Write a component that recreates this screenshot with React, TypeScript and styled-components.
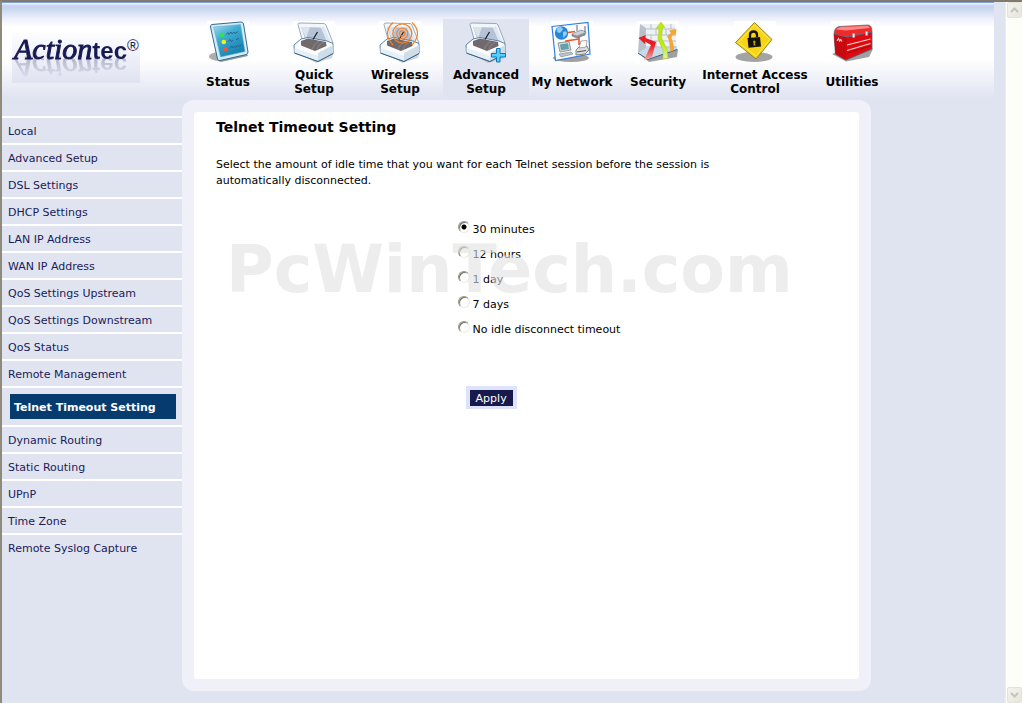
import React, { useState } from 'react';
import styled, { createGlobalStyle } from 'styled-components';

const GlobalStyle = createGlobalStyle`
  *, *::before, *::after { box-sizing: border-box; }
  body {
    margin: 0;
    background: #e0e4f1;
    color: #000;
    font-family: Verdana, 'DejaVu Sans', sans-serif;
    font-size: 11px;
  }
`;

const Frame = styled.div`
  display: flex;
  min-height: 100vh;
  border-top: 2px solid #7f7c6e;
  border-left: 2px solid #8f8b7c;
`;

const Page = styled.div`
  flex: 1;
  min-width: 0;
  display: flex;
  flex-direction: column;
`;

const Header = styled.header`
  display: flex;
  align-items: flex-start;
  height: 98px;
  margin-right: 11px;
  border-top: 1px solid #7f9ad4;
  background: linear-gradient(
    to bottom,
    #ffffff 0px,
    #dfe7f6 1px,
    #c3d2ee 3px,
    #c9d6f0 6px,
    #eceffa 15px,
    #ffffff 24px,
    #ffffff 56px,
    #e0e4f1 95px
  );
`;

const Logo = styled.a`
  display: flex;
  align-items: flex-start;
  width: 128px;
  height: 50px;
  margin: 30px 0 0 10px;
  padding-left: 2px;
  background: linear-gradient(to bottom, #fdfdff, #dfe3f1);
  color: #171a52;
  text-decoration: none;
  white-space: nowrap;
`;

const LogoWord = styled.span`
  display: flex;
  align-items: baseline;
  height: 31px;
  -webkit-box-reflect: below -12px linear-gradient(to bottom, transparent 10%, rgba(0, 0, 0, 0.35));
`;

const LogoScript = styled.span`
  font: italic 30px/31px 'Liberation Serif', serif;
  -webkit-text-stroke: 1px #171a52;
`;

const LogoSans = styled.span`
  font: bold 24px/31px 'Liberation Sans', Arial, sans-serif;
`;

const LogoMark = styled.span`
  font: 16px/26px 'Liberation Sans', Arial, sans-serif;
`;

const Nav = styled.nav`
  display: flex;
  margin: 16px 0 0 45px;
`;

const Tab = styled.a<{ $active?: boolean; $wide?: boolean }>`
  display: flex;
  flex-direction: column;
  align-items: center;
  width: ${p => (p.$wide ? 108 : 86)}px;
  height: 81px;
  padding-top: 2px;
  background: ${p => (p.$active ? '#e0e4f1' : 'transparent')};
  color: #000;
  font-size: 12px;
  font-weight: bold;
  line-height: 14px;
  text-align: center;
  text-decoration: none;

  svg {
    width: 42px;
    height: 42px;
    flex: none;
    background: ${p => (p.$active ? 'transparent' : '#fff')};
  }
`;

const TabLabel = styled.span`
  display: flex;
  align-items: center;
  height: 38px;
  white-space: pre;
`;

const Columns = styled.div`
  flex: 1;
  display: flex;
`;

const Sidebar = styled.nav`
  flex: none;
  width: 180px;
  padding-top: 16px;
`;

const Menu = styled.ul`
  list-style: none;
  margin: 0;
  padding: 0;
`;

const MenuItem = styled.li<{ $active?: boolean }>`
  border-top: 2px solid #fff;
  padding: ${p => (p.$active ? '6px 6px 6px 8px' : '0')};
`;

const MenuLink = styled.a<{ $active?: boolean }>`
  display: block;
  padding-top: 2px;
  padding-left: ${p => (p.$active ? 4 : 6)}px;
  line-height: 23px;
  color: ${p => (p.$active ? '#fff' : '#1b1b57')};
  background: ${p => (p.$active ? '#063b70' : 'transparent')};
  font-weight: ${p => (p.$active ? 'bold' : 'normal')};
  text-decoration: none;
  white-space: nowrap;
`;

const Panel = styled.main`
  flex: 1;
  min-width: 0;
  display: flex;
  margin: 0 134px 12px 0;
  padding: 12px;
  border-radius: 12px;
  background: #f0f1f8;
`;

const Content = styled.section`
  position: relative;
  flex: 1;
  min-width: 0;
  padding: 6px 0 0 22px;
  border-radius: 3px;
  background: #fff;
`;

const Title = styled.h1`
  margin: 0;
  font-size: 14px;
  line-height: 18px;
`;

const Intro = styled.p`
  max-width: 530px;
  margin: 21px 0 0;
  line-height: 16px;
`;

const Form = styled.form`
  width: fit-content;
  margin: 31px auto 0;
`;

const Options = styled.fieldset`
  margin: 0;
  padding: 0 0 0 3px;
  border: 0;
`;

const Option = styled.label`
  display: flex;
  gap: 3px;
  height: 25px;
  line-height: 19px;
  white-space: nowrap;
`;

const Radio = styled.input`
  appearance: none;
  width: 12px;
  height: 12px;
  margin: 1px 0 0;
  border: 1px solid;
  border-color: #9a9788 #efecdf #efecdf #9a9788;
  border-radius: 50%;
  background: #fff;
  box-shadow: inset 1px 1px 0 #77746a;

  &:checked {
    background: radial-gradient(circle at 5px 5px, #000 2px, #fff 3px);
  }
`;

const Apply = styled.button`
  display: block;
  margin: 41px 0 0 11px;
  padding: 1px 6px 0;
  border: 4px solid #dde3fd;
  border-bottom-width: 3px;
  background: #171a4b;
  color: #fff;
  font: inherit;
  line-height: 15px;
`;

const Watermark = styled.div`
  position: absolute;
  top: 120px;
  left: 32px;
  color: rgba(225, 225, 225, 0.6);
  font-size: 65px;
  font-weight: bold;
  line-height: 75px;
  pointer-events: none;
`;

const ScrollBar = styled.div`
  flex: none;
  display: flex;
  flex-direction: column;
  justify-content: space-between;
  width: 17px;
  border-left: 1px solid #eeede5;
  background: #fefef8;
`;

const ScrollButton = styled.button`
  display: flex;
  align-items: center;
  justify-content: center;
  width: 15px;
  height: 16px;
  margin: 0 1px;
  padding: 0;
  border: 1px solid #e3e2d8;
  border-radius: 2px;
  background: linear-gradient(135deg, #f4f4ef, #e6e5dc);
`;

const StatusIcon = () => (
  <svg viewBox="0 0 42 42" aria-hidden="true">
    <defs>
      <linearGradient id="screen" x1="0" y1="0" x2="0.6" y2="1">
        <stop offset="0" stopColor="#a9dcec" />
        <stop offset="0.4" stopColor="#3fadd3" />
        <stop offset="1" stopColor="#157fae" />
      </linearGradient>
    </defs>
    <ellipse cx="14" cy="35.500" rx="12" ry="4.500" fill="#999" opacity="0.8" />
    <path d="M11 40L40 33L41 35L14 41Z" fill="#8d9aa5" />
    <path d="M5 3.500L34 1Q36 1 36.500 3L41 31Q41 33 39 33.600L13 39.500Q11 40 10.500 38L3.500 6Q3.300 4 5 3.500Z" fill="#d7ecf6" stroke="#35688f" strokeWidth="1" />
    <path d="M6.500 6L33.500 3.500L38 30.500L13.500 36Z" fill="url(#screen)" stroke="#5cb5d6" strokeWidth="0.600" />
    <circle cx="15.200" cy="14" r="2.300" fill="#2fe83c" />
    <circle cx="16.800" cy="21" r="2.300" fill="#f3ee1c" />
    <circle cx="18.600" cy="28" r="2.300" fill="#ee5638" />
    <path d="M19 13.500l2-2 1 2 2-2.500 1 2 2-2 1 1.500 3-2M21 20.500l2-2 1 2 2-1.500M29 18.500l3-1M22.500 27.500l2-2.500 1 2 2-2 1 1.500 2-2 1 1 4-2" fill="none" stroke="#28618c" strokeWidth="0.900" />
  </svg>
);

const BoxArt = () => (
  <>
    <path d="M0 29L23 42L39 37L41 30Z" fill="#777" opacity="0.3" />
    <path d="M5 3.500Q5 2 7 2L29 2.500Q32 2 33 4L40 22L33 24L9 18Z" fill="#f4f7fa" stroke="#8195a8" strokeWidth="0.800" />
    <path d="M8 6L28 6.500L35 22L12 17.500Z" fill="#b5c3d8" />
    <path d="M8 6L17 6L13 17.500Z" fill="#dbe3ee" />
    <path d="M28 6.500L31 5L38 22L34.500 22Z" fill="#dfe7ee" />
    <path d="M1 24L8 18L15 16.500L34 20L40 22.500V32.500L25 40.500L1.500 32Z" fill="#fafcfd" stroke="#49779e" strokeWidth="0.900" />
    <path d="M25 32L40 24V32.500L25 40.500Z" fill="#cfdde9" />
    <path d="M1.500 27L25 35V40L1.500 32Z" fill="#e7eef4" />
    <path d="M1.500 32L25 40.500L40 32.500" fill="none" stroke="#2e648f" strokeWidth="1" />
    <path d="M8 20L15 17.500L33 21L33.500 25L22 30L8 24.500Z" fill="#706a6d" />
    <path d="M19 28.500Q21 23 26 20.500M24 29Q25 24 30 21.500" fill="none" stroke="#857e82" strokeWidth="1.300" />
    <path d="M20 18.500L24.500 11" stroke="#222" strokeWidth="1.300" />
  </>
);

const QuickIcon = () => (
  <svg viewBox="0 0 42 42" aria-hidden="true"><BoxArt /></svg>
);

const WirelessIcon = () => (
  <svg viewBox="0 0 42 42" aria-hidden="true">
    <BoxArt />
    <g fill="none" stroke="#f5822a" strokeWidth="1.200">
      <circle cx="23.300" cy="12.500" r="2.700" />
      <circle cx="23.300" cy="12.500" r="5.500" />
      <circle cx="23.300" cy="12.500" r="9.500" />
      <path d="M14 1.500Q3 12 14 24M33 1.500Q44 12 33 24" />
    </g>
  </svg>
);

const AdvancedIcon = () => (
  <svg viewBox="0 0 42 42" aria-hidden="true">
    <BoxArt />
    <path d="M31.500 27.500h3.500v5h5.500v3.500h-5.500v5h-3.500v-5h-5v-3.500h5z" fill="#57cdfa" stroke="#0b78bd" strokeWidth="1" />
  </svg>
);

const NetworkIcon = () => (
  <svg viewBox="0 0 42 42" aria-hidden="true">
    <ellipse cx="20" cy="37" rx="18" ry="4" fill="#888" opacity="0.8" />
    <path d="M1 5.500L37 1.500L39 33L4.500 39.500Z" fill="#fbfcfd" stroke="#2f7fe4" strokeWidth="1.200" />
    <path d="M17 11.500L24 10.500M28 16V23L34 22M28 18L15 20V24" fill="none" stroke="#f0562e" strokeWidth="1.600" />
    <circle cx="10.500" cy="12" r="6.700" fill="#2686d8" />
    <path d="M6 7.500Q10 4.500 12 8Q10 12 8 12Q5 11 6 7.500ZM12 11Q16 9 16 13L12 17Z" fill="#93cdf3" />
    <path d="M21 13L30 9L35 11L34 14L26 17L21 15Z" fill="#8a9198" stroke="#596068" strokeWidth="0.500" />
    <path d="M21 13L30 9.500L35 11L26 14.500Z" fill="#cdd2d6" />
    <path d="M26 4V10M34 5V11" stroke="#555" strokeWidth="0.900" />
    <path d="M7 22L18 20.500L20 29L9 31Z" fill="#d9dddc" stroke="#777f80" strokeWidth="0.800" />
    <path d="M9 23.500L17 22.300L18 28L10 29.300Z" fill="#63a0a7" />
    <path d="M8 33L20 31L22 33L10 36Z" fill="#bfc5c2" stroke="#818784" strokeWidth="0.600" />
    <path d="M25 29L28 26L36 25L38 29L34 33L25 34Z" fill="#dadcdc" stroke="#666c70" strokeWidth="0.800" />
    <path d="M28 27L30 20L36 19.500L35 26Z" fill="#fff" stroke="#777" strokeWidth="0.600" />
    <path d="M26 31L35 29.500" stroke="#555" strokeWidth="1" />
  </svg>
);

const SecurityIcon = () => (
  <svg viewBox="0 0 42 42" aria-hidden="true">
    <defs>
      <linearGradient id="redArrow" x1="0" y1="0" x2="0" y2="1">
        <stop offset="0.400" stopColor="#e81c24" />
        <stop offset="1" stopColor="#f7a6a0" />
      </linearGradient>
      <linearGradient id="greenArrow" x1="0" y1="0" x2="0" y2="1">
        <stop offset="0.600" stopColor="#bfe80e" />
        <stop offset="1" stopColor="#e3f2a2" />
      </linearGradient>
    </defs>
    <path d="M1 32L12 41L40 36L41 28Z" fill="#888" opacity="0.800" />
    <path d="M3 3H38L40 28L11 38.500L1 32Z" fill="#eef2f5" />
    <path d="M3 3L9 7V28L1 32Z" fill="#b9c2cc" />
    <path d="M1 32L9 27L40 25V28.500L11 38.500Z" fill="#c6dbea" />
    <path d="M1 32L11 38.500L40 28.500" fill="none" stroke="#36618d" strokeWidth="1" />
    <path d="M9 8H38M9 14H38M9 20H39M9 26H39M14 3V8M24 3V8M34 3V8M19 8V14M29 8V14M14 14V20M34 14V20M19 20V26M33 20V26M3 10L9 13M3 19L9 21" fill="none" stroke="#b5c0cb" strokeWidth="1" />
    <path d="M30 15L34 12L32 9.500L39.500 8L38.500 15L36.500 13.500L34 16.500Q37 22 37 29L33 31Q34 22 30 15Z" fill="#f5a536" />
    <path d="M7 39L14 24L8 20.500V23L1.500 17L8.500 14V17L19 21L15 36Z" fill="url(#redArrow)" />
    <path d="M26 38L26 29L21 18L22 7L19 7.500L24 1L28 6.500L25.500 6.500L24.500 17L30 28L31 37Z" fill="url(#greenArrow)" stroke="#a6c621" strokeWidth="0.500" />
  </svg>
);

const LockIcon = () => (
  <svg viewBox="0 0 42 42" aria-hidden="true">
    <ellipse cx="20" cy="36" rx="18.500" ry="5" fill="#a3a3a3" />
    <path d="M20.500 1.500L38 18.500L22 38L1.500 21.500Z" fill="#f7d514" stroke="#8c7a18" strokeWidth="0.900" />
    <path d="M20.500 4L35.500 18.500L22 35L4.500 21.500Z" fill="none" stroke="#ffe95a" strokeWidth="1" />
    <path d="M16 17V14Q16 10.500 19.500 10.500Q23 10.500 23 14V16" fill="none" stroke="#15130a" strokeWidth="2.300" />
    <path d="M13.500 17L26 16L27 25.500L14.500 26.800Z" fill="#15130a" />
    <path d="M20 19.500a1.400 1.400 0 0 1 1 2.500l.5 2.500h-2l.2-2.500a1.400 1.400 0 0 1 .3-2.500" fill="#b89d10" />
  </svg>
);

const UtilitiesIcon = () => (
  <svg viewBox="0 0 42 42" aria-hidden="true">
    <path d="M1 33L15 40.500L38 36L42 28L30 22Z" fill="#777" opacity="0.700" />
    <path d="M3 13L16 16L41 11V28L15 39L4.500 33Z" fill="#df0a0f" stroke="#3f6488" strokeWidth="0.800" />
    <path d="M3 13L16 17L15 39L4.500 33Z" fill="#c8090d" />
    <path d="M3 13Q3 7 8 5.500L37 4Q41 4 41 11L16 16Z" fill="#ee2a2a" stroke="#4e6a88" strokeWidth="0.700" />
    <path d="M5 8.500Q7 6 10 6L37 4.800L39 7L15 9.500Z" fill="#ff8a83" />
    <path d="M16 24L39.500 18M16 29.500L39.500 22.500" stroke="#f9d5d3" strokeWidth="1.200" />
    <path d="M16 32L40 25" stroke="#8e0709" strokeWidth="0.700" />
    <path d="M21.500 12.500h2.300v4h-2.300zM34.500 10.500h2.200v4h-2.200z" fill="#f3f3f3" stroke="#888" strokeWidth="0.400" />
    <path d="M6 20l1.500-2.500 1.200 2.500 1-1.500 1.300 2" fill="none" stroke="#f4c6c4" strokeWidth="1.200" />
  </svg>
);

const tabs = [
  { label: 'Status', Icon: StatusIcon },
  { label: 'Quick\nSetup', Icon: QuickIcon },
  { label: 'Wireless\nSetup', Icon: WirelessIcon },
  { label: 'Advanced\nSetup', Icon: AdvancedIcon, active: true },
  { label: 'My Network', Icon: NetworkIcon },
  { label: 'Security', Icon: SecurityIcon },
  { label: 'Internet Access\nControl', Icon: LockIcon, wide: true },
  { label: 'Utilities', Icon: UtilitiesIcon },
];

const menu = [
  'Local', 'Advanced Setup', 'DSL Settings', 'DHCP Settings', 'LAN IP Address', 'WAN IP Address',
  'QoS Settings Upstream', 'QoS Settings Downstream', 'QoS Status', 'Remote Management',
  'Telnet Timeout Setting', 'Dynamic Routing', 'Static Routing', 'UPnP', 'Time Zone',
  'Remote Syslog Capture',
];

const timeouts = ['30 minutes', '12 hours', '1 day', '7 days', 'No idle disconnect timeout'];

export default function App() {
  const [timeoutValue, setTimeoutValue] = useState(timeouts[0]);
  const current = 'Telnet Timeout Setting';

  return (
    <>
      <GlobalStyle />
      <Frame>
        <Page>
          <Header>
            <Logo href="#home">
              <LogoWord>
                <LogoScript>Action</LogoScript>
                <LogoSans>tec</LogoSans>
              </LogoWord>
              <LogoMark>®</LogoMark>
            </Logo>
            <Nav aria-label="Main">
              {tabs.map(({ label, Icon, active, wide }) => (
                <Tab key={label} href="#tab" $active={active} $wide={wide}>
                  <Icon />
                  <TabLabel>{label}</TabLabel>
                </Tab>
              ))}
            </Nav>
          </Header>
          <Columns>
            <Sidebar aria-label="Advanced setup">
              <Menu>
                {menu.map(item => (
                  <MenuItem key={item} $active={item === current}>
                    <MenuLink href="#item" $active={item === current}>{item}</MenuLink>
                  </MenuItem>
                ))}
              </Menu>
            </Sidebar>
            <Panel>
              <Content>
                <Title>Telnet Timeout Setting</Title>
                <Intro>
                  Select the amount of idle time that you want for each Telnet session before the
                  session is automatically disconnected.
                </Intro>
                <Form onSubmit={e => e.preventDefault()}>
                  <Options aria-label="Telnet timeout">
                    {timeouts.map(value => (
                      <Option key={value}>
                        <Radio
                          type="radio"
                          name="timeout"
                          checked={timeoutValue === value}
                          onChange={() => setTimeoutValue(value)}
                        />
                        {value}
                      </Option>
                    ))}
                  </Options>
                  <Apply type="submit">Apply</Apply>
                </Form>
                <Watermark>PcWinTech.com</Watermark>
              </Content>
            </Panel>
          </Columns>
        </Page>
        <ScrollBar>
          <ScrollButton type="button" aria-label="Scroll up">
            <svg width="9" height="6" viewBox="0 0 9 6"><path d="M1 5L4.500 1.500L8 5" fill="none" stroke="#c6c5bb" strokeWidth="2" /></svg>
          </ScrollButton>
          <ScrollButton type="button" aria-label="Scroll down">
            <svg width="9" height="6" viewBox="0 0 9 6"><path d="M1 1L4.500 4.500L8 1" fill="none" stroke="#c6c5bb" strokeWidth="2" /></svg>
          </ScrollButton>
        </ScrollBar>
      </Frame>
    </>
  );
}
